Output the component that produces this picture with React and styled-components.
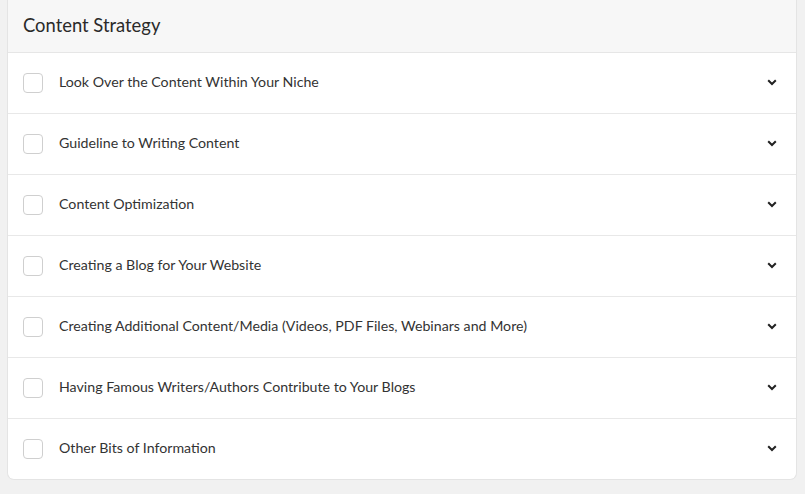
import React from "react";
import styled, { createGlobalStyle } from "styled-components";

const GlobalStyle = createGlobalStyle`
  body {
    margin: 0;
    background: #f1f1f1;
    font-family: Lato, "Open Sans", sans-serif;
  }
`;

const items = [
  "Look Over the Content Within Your Niche",
  "Guideline to Writing Content",
  "Content Optimization",
  "Creating a Blog for Your Website",
  "Creating Additional Content/Media (Videos, PDF Files, Webinars and More)",
  "Having Famous Writers/Authors Contribute to Your Blogs",
  "Other Bits of Information",
];

const Chevron = () => (
  <svg width="10" height="7" viewBox="0 0 10 7">
    <path d="M1.2 1.2 L5 5 L8.8 1.2" fill="none" stroke="#222" strokeWidth="2" />
  </svg>
);

const App = () => (
  <>
    <GlobalStyle />
    <Page>
      <Card>
        <Header>Content Strategy</Header>
        {items.map((t) => (
          <Row key={t}>
            <Check type="button" aria-label="check" />
            <Label>{t}</Label>
            <Toggle>
              <Chevron />
            </Toggle>
          </Row>
        ))}
      </Card>
    </Page>
  </>
);

export default App;

const Page = styled.div`
  padding: 0 8px 15px 7px;
`;

const Card = styled.div`
  background: #fff;
  border: 1px solid #e4e4e4;
  border-top: none;
  border-radius: 0 0 7px 7px;
  overflow: hidden;
`;

const Header = styled.div`
  height: 53px;
  box-sizing: border-box;
  display: flex;
  align-items: center;
  padding: 0 15px 3px;
  background: #f7f7f7;
  border-bottom: 1px solid #e6e6e6;
  font-size: 18.4px;
  color: #2a2a2a;
`;

const Row = styled.div`
  height: 61px;
  box-sizing: border-box;
  display: flex;
  align-items: center;
  padding: 0 19px 1px 15px;
  border-bottom: 1px solid #e8e8e8;

  &:last-child {
    border-bottom: none;
    height: 60px;
  }
`;

const Check = styled.button`
  width: 20px;
  height: 20px;
  padding: 0;
  margin: 0 16px 0 0;
  border: 1px solid #cfcfcf;
  border-radius: 4px;
  background: #fff;
  flex-shrink: 0;
`;

const Label = styled.span`
  flex: 1;
  font-size: 14.2px;
  color: #333;
  padding-bottom: 3px;
`;

const Toggle = styled.span`
  display: flex;
  align-items: center;
  padding-bottom: 1px;
`;
